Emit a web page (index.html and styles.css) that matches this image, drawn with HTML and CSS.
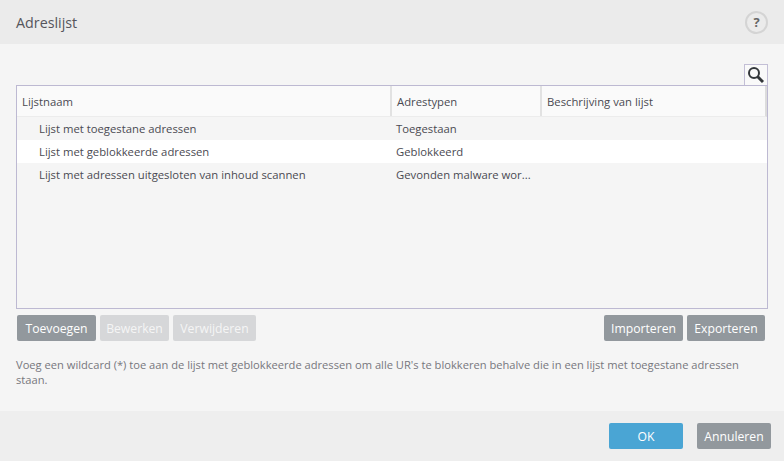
FILE: index.html
```html
<!DOCTYPE html>
<html lang="nl">
<head>
  <meta charset="UTF-8">
  <title>Adreslijst</title>
  <link rel="stylesheet" href="styles.css">
</head>
<body>
  <div class="header">
    <h1>Adreslijst</h1>
    <div class="help">?</div>
  </div>

  <div class="content">
    <div class="search-row">
      <div class="search-tab">
        <svg width="18" height="18" viewBox="0 0 18 18">
          <circle cx="7" cy="7" r="5" fill="none" stroke="#33373a" stroke-width="2"/>
          <path d="M10.5 10.5l5.5 5.5" stroke="#33373a" stroke-width="3"/>
        </svg>
      </div>
    </div>

    <div class="table">
      <div class="row head">
        <div class="cell c1">Lijstnaam</div>
        <div class="cell c2">Adrestypen</div>
        <div class="cell c3">Beschrijving van lijst</div>
      </div>
      <div class="row item">
        <div class="cell c1">Lijst met toegestane adressen</div>
        <div class="cell c2">Toegestaan</div>
        <div class="cell c3"></div>
      </div>
      <div class="row item alt">
        <div class="cell c1">Lijst met geblokkeerde adressen</div>
        <div class="cell c2">Geblokkeerd</div>
        <div class="cell c3"></div>
      </div>
      <div class="row item">
        <div class="cell c1">Lijst met adressen uitgesloten van inhoud scannen</div>
        <div class="cell c2">Gevonden malware wor...</div>
        <div class="cell c3"></div>
      </div>
    </div>

    <div class="actions">
      <button class="btn w79">Toevoegen</button>
      <button class="btn off w69">Bewerken</button>
      <button class="btn off w83">Verwijderen</button>
      <div class="spacer"></div>
      <button class="btn w79">Importeren</button>
      <button class="btn w78">Exporteren</button>
    </div>

    <p class="note">Voeg een wildcard (*) toe aan de lijst met geblokkeerde adressen om alle UR's te blokkeren behalve die in een lijst met toegestane adressen staan.</p>
  </div>

  <div class="footer">
    <button class="btn ok">OK</button>
    <button class="btn cancel">Annuleren</button>
  </div>
</body>
</html>
```

FILE: styles.css
```css
html, body {
  margin: 0;
  height: 100%;
}
body {
  width: 784px;
  height: 461px;
  overflow: hidden;
  display: flex;
  flex-direction: column;
  background-color: #f5f5f5;
  font-family: "Open Sans", "Noto Sans", sans-serif;
  font-size: 11.3px;
  color: #4a4a52;
}
.header {
  height: 44px;
  flex: none;
  display: flex;
  align-items: center;
  justify-content: space-between;
  padding: 0 16px;
  background-color: #ebebeb;
}
h1 {
  margin: 0;
  font-size: 14.3px;
  font-weight: 400;
  color: #55555c;
}
.help {
  width: 19px;
  height: 19px;
  border: 2px solid #d4d4d4;
  border-radius: 50%;
  background-color: #ebebeb;
  text-align: center;
  line-height: 19px;
  font-size: 13px;
  font-weight: 700;
  color: #666;
}
.content {
  flex: 1;
  padding: 20px 16px 0;
}
.search-row {
  display: flex;
  justify-content: flex-end;
}
.search-tab {
  width: 22px;
  height: 20px;
  display: flex;
  align-items: center;
  justify-content: center;
  border: 1px solid #c3bfd6;
  border-bottom: none;
  background-color: #f9f9f9;
}
.table {
  height: 222px;
  border: 1px solid #bdb9d2;
  background-color: #f5f5f5;
}
.row {
  display: flex;
  height: 23px;
  align-items: center;
}
.row.head {
  height: 30px;
  background-color: #fafafa;
  border-bottom: 1px solid #ececec;
  border-right: 2px solid #dcdcdc;
}
.item.alt {
  background-color: #fff;
}
.cell {
  height: 100%;
  display: flex;
  align-items: center;
  box-sizing: border-box;
  white-space: nowrap;
}
.c1 {
  width: 373px;
  padding-left: 22px;
}
.c2 {
  width: 150px;
  padding-left: 6px;
}
.c3 {
  flex: 1;
  padding-left: 5px;
}
.head .c1 {
  padding-left: 5px;
}
.head .c2, .head .c3 {
  border-left: 2px solid #e2e2e2;
  padding-left: 5px;
}
.actions {
  display: flex;
  gap: 4px;
  margin-top: 6px;
  padding: 0 3px 0 1px;
}
.spacer {
  flex: 1;
}
.btn {
  height: 26px;
  padding: 0;
  border: none;
  border-radius: 2px;
  background-color: #92989d;
  font-family: inherit;
  font-size: 12.2px;
  color: #fff;
}
.btn.off {
  background-color: #d6d7d9;
  color: #f5f5f5;
}
.w79 { width: 79px; }
.w78 { width: 78px; }
.w69 { width: 69px; }
.w83 { width: 83px; }
.note {
  margin: 16px 0 0;
  font-size: 11.15px;
  line-height: 15px;
  color: #77777d;
}
.footer {
  height: 50px;
  flex: none;
  display: flex;
  align-items: center;
  justify-content: flex-end;
  gap: 14px;
  padding-right: 13px;
  background-color: #eeeeee;
}
.btn.ok {
  width: 74px;
  background-color: #4aa5d4;
}
.btn.cancel {
  width: 74px;
}
```
